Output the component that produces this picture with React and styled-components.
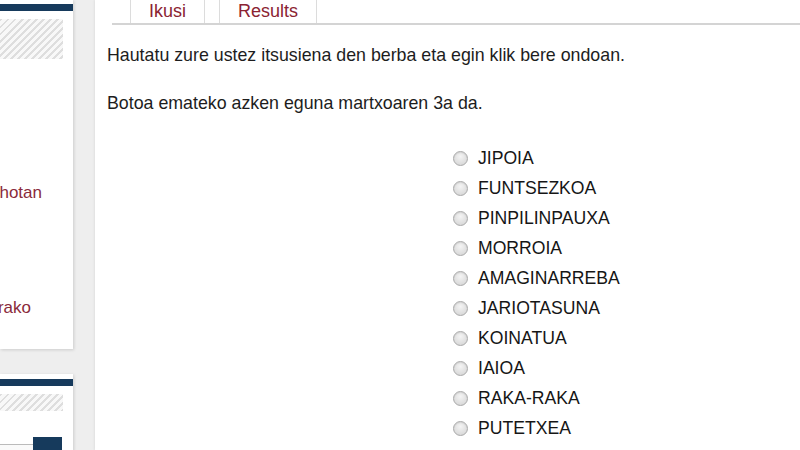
import React from 'react';
import styled, { createGlobalStyle } from 'styled-components';

const WORDS = [
  'JIPOIA', 'FUNTSEZKOA', 'PINPILINPAUXA', 'MORROIA', 'AMAGINARREBA',
  'JARIOTASUNA', 'KOINATUA', 'IAIOA', 'RAKA-RAKA', 'PUTETXEA', 'GUREROSTEA'
];

const GlobalStyle = createGlobalStyle`
  html, body { margin: 0; padding: 0; }
  body {
    background: #eeeeee;
    font-family: "Liberation Sans", Arial, Helvetica, sans-serif;
    overflow: hidden;
  }
`;

const Page = styled.div`
  display: flex;
  width: 800px;
  height: 450px;
  overflow: hidden;
`;

const Sidebar = styled.aside`
  width: 73px;
  flex-shrink: 0;
  display: flex;
  flex-direction: column;
  gap: 25px;
`;

const Card = styled.div`
  background: #fff;
  box-shadow: 1px 1px 3px rgba(0, 0, 0, 0.14);
  padding-top: ${p => p.$top || 4}px;
  height: ${p => p.$height ? `${p.$height}px` : 'auto'};
  flex-shrink: 0;
  overflow: hidden;
  display: flex;
  flex-direction: column;
`;

const NavyBar = styled.div`
  height: 7px;
  background: #163a5c;
`;

const Hatch = styled.div`
  width: 63px;
  height: ${p => p.$h}px;
  margin-top: 8px;
  background: repeating-linear-gradient(
    135deg,
    #dedede 0 2px,
    #f8f8f8 2px 5px
  );
`;

const SideLink = styled.div`
  display: flex;
  justify-content: flex-end;
  white-space: nowrap;
  overflow: hidden;
  padding-right: ${p => p.$pr}px;
  margin-top: ${p => p.$mt}px;
  font-size: 17px;
  line-height: 20px;
  color: #8a2a3b;
`;

const SideForm = styled.div`
  display: flex;
  align-items: flex-end;
  margin-top: 26px;
  height: 14px;
`;

const SideInput = styled.div`
  width: 33px;
  height: 6px;
  margin-top: 8px;
  border-top: 1px solid #bbb;
  background: #fafafa;
`;

const SideButton = styled.div`
  width: 29px;
  height: 14px;
  background: #163a5c;
`;

const Main = styled.main`
  flex: 1;
  margin-left: 22px;
  background: #fff;
  box-shadow: -1px 0 2px rgba(0, 0, 0, 0.06);
  padding-left: 12px;
  color: #1d1d1d;
`;

const TabBar = styled.nav`
  display: flex;
  gap: 14px;
  margin-left: 5px;
  padding-left: 18px;
  border-bottom: 2px solid #d4d4d4;
  height: 23px;
`;

const Tab = styled.div`
  height: 23px;
  padding: 0 18px;
  border: 1px solid #dcdcdc;
  border-top: none;
  border-bottom: none;
  font-size: 18px;
  line-height: 23px;
  color: #8b2332;
`;

const Text = styled.p`
  margin: ${p => p.$mt}px 0 0;
  font-size: 17.8px;
  line-height: 20px;
`;

const Options = styled.div`
  display: flex;
  flex-direction: column;
  margin-top: 30px;
  padding-left: 346px;
`;

const Option = styled.label`
  display: flex;
  align-items: center;
  height: 30px;
  gap: 10px;
  font-size: 17.6px;
  color: #161616;
`;

const Radio = styled.span`
  width: 13px;
  height: 13px;
  border-radius: 50%;
  border: 1px solid #a9a9a9;
  background: radial-gradient(circle at 50% 35%, #f4f4f4 0%, #dcdcdc 70%, #cfcfcf 100%);
  box-shadow: inset 0 1px 1px rgba(0, 0, 0, 0.08);
  flex-shrink: 0;
`;

export default function App() {
  return (
    <Page>
      <GlobalStyle />
      <Sidebar>
        <Card $height={345} $top={4}>
          <NavyBar />
          <Hatch $h={40} />
          <SideLink $pr={31} $mt={124}>Aurreko inkestak hilabete hotan</SideLink>
          <SideLink $pr={42} $mt={95}>Zure iritzirako</SideLink>
        </Card>
        <Card $top={5}>
          <NavyBar />
          <Hatch $h={17} />
          <SideForm>
            <SideInput />
            <SideButton />
          </SideForm>
        </Card>
      </Sidebar>
      <Main>
        <TabBar>
          <Tab>Ikusi</Tab>
          <Tab>Results</Tab>
        </TabBar>
        <Text $mt={20}>Hautatu zure ustez itsusiena den berba eta egin klik bere ondoan.</Text>
        <Text $mt={28}>Botoa emateko azken eguna martxoaren 3a da.</Text>
        <Options>
          {WORDS.map(w => (
            <Option key={w}>
              <Radio />
              {w}
            </Option>
          ))}
        </Options>
      </Main>
    </Page>
  );
}
